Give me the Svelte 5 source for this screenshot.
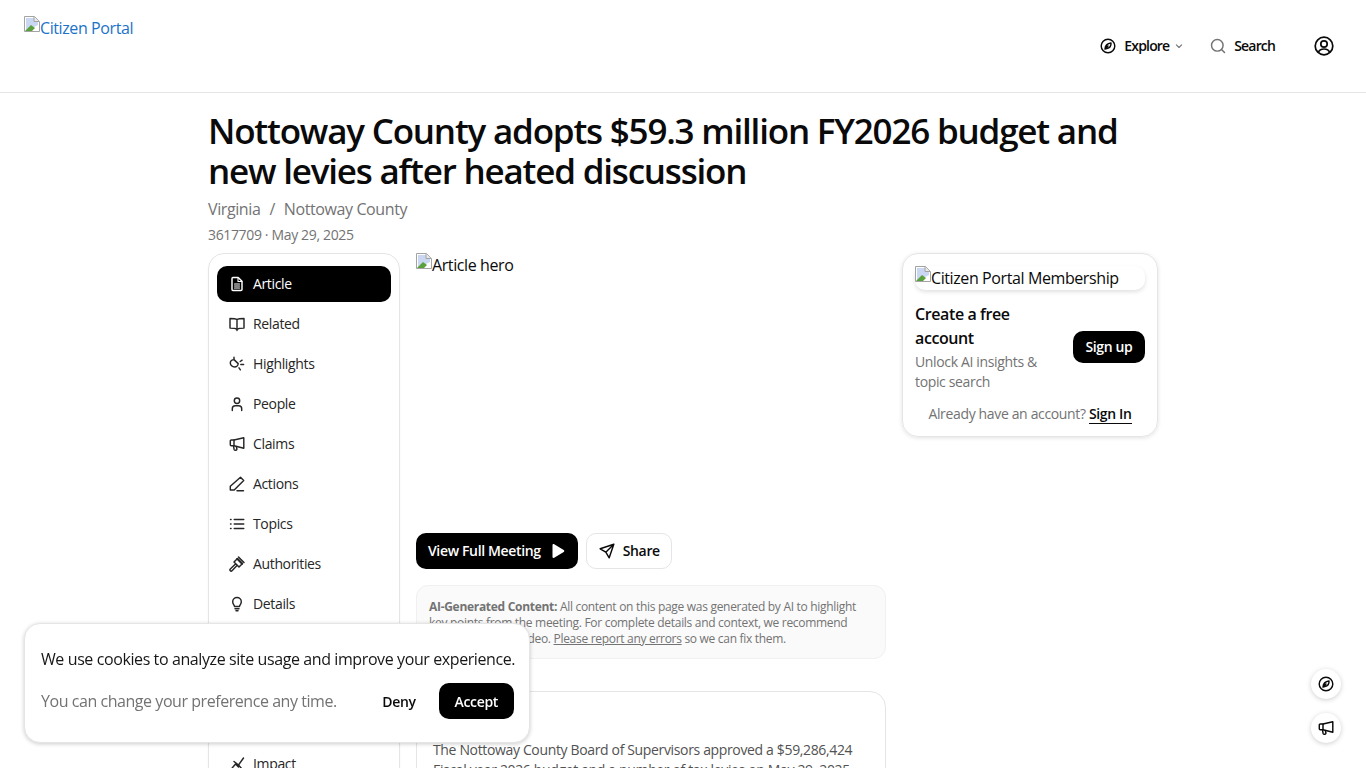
<script>
  const navItems = [
    { label: "Article", icon: "article", active: true },
    { label: "Related", icon: "book" },
    { label: "Highlights", icon: "spark" },
    { label: "People", icon: "person" },
    { label: "Claims", icon: "megaphone" },
    { label: "Actions", icon: "pen" },
    { label: "Topics", icon: "list" },
    { label: "Authorities", icon: "gavel" },
    { label: "Details", icon: "bulb" },
    { label: "Votes", icon: "list" },
    { label: "Funding", icon: "list" },
    { label: "Timeline", icon: "list" },
    { label: "Impact", icon: "impact" }
  ];
</script>

{#snippet icon(name, size = 16)}
  <svg width={size} height={size} viewBox="0 0 16 16" fill="none" stroke="currentColor" stroke-width="1.45" stroke-linecap="round" stroke-linejoin="round">
    {#if name === "article"}
      <path d="M3 2.500A1 1 0 0 1 4 1.500h5.200L13 5.300V13.500a1 1 0 0 1-1 1H4a1 1 0 0 1-1-1z" />
      <path d="M9 1.700V5.500h3.800M5.500 8h5M5.500 10h5M5.500 12h5" stroke-width="1.1" />
    {:else if name === "book"}
      <path d="M8 3.600C7 2.800 5.600 2.400 1 2.400v9.700c4.500 0 6 .4 7 1.300 1-.9 2.500-1.300 7-1.300V2.400C10.400 2.400 9 2.800 8 3.600zM8 3.600v10.800" />
    {:else if name === "spark"}
      <path d="M5 1.200v2.500M1.300 7c0-1.900 1.700-3.400 3.700-3.400l4.200 4c0 1.800-1.700 3.400-3.600 3.400C3.300 11 1.300 9 1.300 7z" />
      <path d="M11.200 5.500l1.900-1.300M11.800 8.400h2.800M10 11.800l1.400 2" />
    {:else if name === "person"}
      <circle cx="8" cy="4.700" r="2.700" />
      <path d="M3.300 14.500v-1.700a3 3 0 0 1 3-3h3.400a3 3 0 0 1 3 3v1.700" />
    {:else if name === "megaphone"}
      <path d="M14.800 1.800v10.400L5 9.800H2.300a1 1 0 0 1-1-1V5a1 1 0 0 1 1-1H5z" />
      <path d="M4.500 9.800l.6 3.600a1 1 0 0 0 1 .8h.8a1 1 0 0 0 1-1.200l-.5-2.400M5 4v5.800" />
    {:else if name === "pen"}
      <path d="M11.500 1.300l3.200 3.200-9.500 9.500H1.300v-3.800zM8 14.800h6.500" />
    {:else if name === "list"}
      <path d="M5.300 3.500h9.400M5.300 8h9.400M5.300 12.500h9.400" stroke-width="1.6" />
      <path d="M1.600 3.500h.4M1.600 8h.4M1.600 12.500h.4" stroke-width="1.6" />
    {:else if name === "gavel"}
      <path d="M9.500 1l5.500 5.500M7.800 2.800l5.400 5.400M8.500 2.500L5 6l5 5 3.500-3.500zM6.500 8L1.300 13a1.200 1.200 0 0 0 1.700 1.700L8 9.500" />
    {:else if name === "bulb"}
      <path d="M5.500 10.500c0-1.300-1.800-2.200-1.800-4.700a4.300 4.300 0 0 1 8.600 0c0 2.500-1.800 3.400-1.800 4.700zM6 12.800h4M7 14.800h2" />
    {:else if name === "impact"}
      <path d="M1.500 14l5-6 3 3M5 5.500l4.500 3.500 5-7M9.500 9l3.500 4" />
    {:else if name === "compass"}
      <circle cx="8" cy="8" r="6.800" />
      <path d="M11 5c.2 2.600-1 5-4.200 5.600L5 11c.2-3 1.800-5.400 6-6zM5 11l3-3" />
    {:else if name === "search"}
      <circle cx="7.300" cy="7.300" r="5.800" />
      <path d="M11.500 11.500l3 3" />
    {:else if name === "send"}
      <path d="M14.800 1.200L1.200 5.800l5.600 3.400 3.400 5.600zM6.800 9.200l8-8" />
    {:else if name === "chevron"}
      <path d="M4.500 6.500L8 10l3.500-3.500" />
    {/if}
  </svg>
{/snippet}

{#snippet brokenImg(alt)}
  <span class="broken">
    <svg class="broken-icon" width="16" height="16" viewBox="0 0 16 16">
      <path d="M.5.5h10l5 5v10H.5z" fill="#fff" stroke="#a3a3a3" />
      <path d="M2 2h8v4h4v3L8 12l-6 2z" fill="#c9d7f2" />
      <path d="M1 15l6-6 4 3-3 3z" fill="#5aa03c" />
      <path d="M10 .5v5h5" fill="#e8e8e8" stroke="#a3a3a3" />
    </svg>{alt}
  </span>
{/snippet}

<header class="site-header">
  <a class="logo" href="#top">{@render brokenImg("Citizen Portal")}</a>
  <nav class="top-nav">
    <button class="top-link">{@render icon("compass")}<span class="t">Explore</span><span class="chev">{@render icon("chevron", 12)}</span></button>
    <button class="top-link"><span class="grey">{@render icon("search")}</span><span class="t">Search</span></button>
    <button class="account" aria-label="Account">
      <svg width="20" height="20" viewBox="0 0 20 20" fill="none" stroke="currentColor" stroke-width="1.7">
        <circle cx="10" cy="10" r="8.800" />
        <circle cx="10" cy="8" r="3.200" />
        <path d="M4.300 16.500c.8-2.300 2.900-3.500 5.700-3.500s4.900 1.200 5.700 3.500" />
      </svg>
    </button>
  </nav>
</header>

<main class="page">
  <h1>Nottoway County adopts $59.3 million FY2026 budget and new levies after heated discussion</h1>
  <div class="crumbs"><span>Virginia</span><span class="sep">/</span><span>Nottoway County</span></div>
  <div class="meta">3617709 · May 29, 2025</div>

  <div class="columns">
    <aside class="sidebar">
      {#each navItems as item}
        <a class="nav-item" class:active={item.active} href="#top">
          {@render icon(item.icon)}
          <span class="t">{item.label}</span>
        </a>
      {/each}
    </aside>

    <div class="content">
      <div class="hero">{@render brokenImg("Article hero")}</div>
      <div class="actions">
        <button class="btn-dark"><span class="t">View Full Meeting</span>
          <svg width="16" height="16" viewBox="0 0 16 16" fill="currentColor"><path d="M2.500 2.200c0-1 .9-1.500 1.700-1l9.500 5.800c.8.500.8 1.500 0 2l-9.500 5.800c-.8.500-1.700 0-1.700-1z" /></svg>
        </button>
        <button class="btn-light">{@render icon("send")}<span class="t">Share</span></button>
      </div>
      <div class="notice">
        <b>AI-Generated Content:</b> All content on this page was generated by AI to highlight key points from the meeting. For complete details and context, we recommend watching the full video. <u>Please report any errors</u> so we can fix them.
      </div>
      <article class="summary">
        <h2>Article</h2>
        <p>The Nottoway County Board of Supervisors approved a $59,286,424 Fiscal year 2026 budget and a number of tax levies on May 29, 2025.</p>
      </article>
    </div>

    <aside class="right">
      <div class="member-card">
        <div class="member-img">{@render brokenImg("Citizen Portal Membership")}</div>
        <div class="member-row">
          <div>
            <div class="member-title">Create a free account</div>
            <div class="member-sub">Unlock AI insights &amp; topic search</div>
          </div>
          <button class="signup"><span class="t">Sign up</span></button>
        </div>
        <div class="signin">Already have an account? <a href="#top">Sign In</a></div>
      </div>
    </aside>
  </div>
</main>

<div class="cookie">
  <p>We use cookies to analyze site usage and improve your experience.</p>
  <div class="cookie-row">
    <span class="cookie-note">You can change your preference any time.</span>
    <button class="deny">Deny</button>
    <button class="accept">Accept</button>
  </div>
</div>

<div class="fabs">
  <button class="fab" aria-label="Explore">{@render icon("compass")}</button>
  <button class="fab" aria-label="Claims">{@render icon("megaphone")}</button>
</div>

<style>
  :global(html), :global(body) {
    height: 768px;
    overflow: hidden;
  }
  :global(body) {
    background: #fff;
    color: #0a0a0a;
    font-family: "Open Sans", "Noto Sans", sans-serif;
    font-size: 14px;
  }
  :global(*) {
    letter-spacing: -0.025em;
  }
  button {
    font: inherit;
    border: 0;
    background: none;
    color: inherit;
    padding: 0;
  }
  a {
    color: inherit;
    text-decoration: none;
  }
  svg {
    flex: none;
    display: block;
  }
  .t {
    display: block;
    margin-bottom: 2px;
  }
  .broken {
    font-size: 16px;
    line-height: 24px;
  }
  .broken-icon {
    display: inline-block;
    vertical-align: 2px;
  }
  .site-header {
    box-sizing: border-box;
    height: 93px;
    border-bottom: 1px solid #e5e5e5;
    display: flex;
    justify-content: space-between;
    padding: 16px 32px 0 24px;
  }
  .logo {
    color: #1a73c8;
  }
  .top-nav {
    display: flex;
    align-items: center;
    height: 60px;
    gap: 25px;
  }
  .top-link {
    display: flex;
    align-items: center;
    gap: 8px;
    font-weight: 600;
    font-size: 14px;
  }
  .top-link .t {
    letter-spacing: -0.06em;
  }
  .chev, .grey {
    color: #737373;
  }
  .chev {
    margin-left: -4px;
  }
  .account {
    margin-left: 14px;
  }
  .page {
    width: 950px;
    margin: 0 auto;
    padding-top: 18px;
  }
  h1 {
    margin: 0;
    font-size: 35px;
    line-height: 40px;
    font-weight: 600;
    letter-spacing: -1.2px;
  }
  .crumbs {
    display: flex;
    gap: 9px;
    margin-top: 6px;
    font-size: 16px;
    line-height: 24px;
    color: #737373;
  }
  .meta {
    margin-top: 4px;
    font-size: 14px;
    line-height: 20px;
    color: #737373;
  }
  .columns {
    display: grid;
    grid-template-columns: 192px 470px 256px;
    gap: 16px;
    margin-top: 8px;
    align-items: start;
  }
  .sidebar {
    border: 1px solid #e5e5e5;
    border-radius: 16px;
    padding: 12px 8px;
    display: flex;
    flex-direction: column;
    gap: 4px;
    box-shadow: 0 1px 2px rgba(0,0,0,.05);
  }
  .nav-item {
    height: 36px;
    border-radius: 10px;
    display: flex;
    align-items: center;
    gap: 8px;
    padding: 0 12px;
    color: #262626;
  }
  .nav-item.active {
    background: #000;
    color: #fff;
    font-weight: 500;
  }
  .hero {
    height: 264px;
    margin-bottom: 16px;
  }
  .actions {
    display: flex;
    gap: 8px;
  }
  .btn-dark {
    height: 36px;
    padding: 0 12px;
    border-radius: 10px;
    background: #000;
    color: #fff;
    font-weight: 600;
    display: flex;
    align-items: center;
    gap: 9px;
  }
  .btn-light {
    height: 36px;
    padding: 0 11px 0 12px;
    border-radius: 10px;
    border: 1px solid #e5e5e5;
    font-weight: 600;
    display: flex;
    align-items: center;
    gap: 8px;
  }
  .notice {
    margin-top: 16px;
    padding: 13px 12px 11px;
    border: 1px solid #f0f0f0;
    background: #fafafa;
    border-radius: 12px;
    font-size: 12px;
    line-height: 16px;
    color: #737373;
  }
  .summary {
    margin-top: 32px;
    border: 1px solid #e5e5e5;
    border-radius: 16px;
    padding: 16px;
  }
  .summary h2 {
    margin: 0 0 8px;
    font-size: 16px;
    line-height: 24px;
    font-weight: 600;
  }
  .summary p {
    margin: 0;
    line-height: 20px;
    color: #525252;
  }
  .member-card {
    border: 1px solid #e5e5e5;
    border-radius: 16px;
    padding: 12px;
    box-shadow: 0 1px 4px rgba(0,0,0,.12);
  }
  .member-img {
    border-radius: 10px;
    box-shadow: 0 2px 4px rgba(0,0,0,.12);
    height: 24px;
    margin-bottom: 12px;
  }
  .member-row {
    display: flex;
    align-items: center;
    gap: 12px;
    justify-content: space-between;
  }
  .member-title {
    font-size: 16px;
    line-height: 24px;
    font-weight: 600;
  }
  .member-sub {
    margin-top: 2px;
    line-height: 20px;
    color: #737373;
  }
  .signup {
    flex: none;
    height: 32px;
    padding: 0 12.5px;
    border-radius: 10px;
    background: #000;
    color: #fff;
    font-weight: 600;
  }
  .signin {
    margin-top: 12px;
    text-align: center;
    color: #737373;
    line-height: 20px;
  }
  .signin a {
    color: #0a0a0a;
    font-weight: 600;
    border-bottom: 1px solid #0a0a0a;
  }
  .cookie {
    position: fixed;
    left: 24px;
    top: 623px;
    width: 506px;
    box-sizing: border-box;
    background: #fff;
    border: 1px solid #e5e5e5;
    border-radius: 16px;
    padding: 23px 15px 23px 16px;
    box-shadow: 0 1px 4px rgba(0,0,0,.2);
  }
  .cookie p {
    margin: 0;
    font-size: 16px;
    line-height: 24px;
    color: #171717;
    white-space: nowrap;
  }
  .cookie-row {
    display: flex;
    align-items: center;
    margin-top: 12px;
    font-size: 16px;
    color: #737373;
  }
  .cookie-note {
    flex: 1;
    letter-spacing: -0.028em;
  }
  .deny {
    font-weight: 600;
    font-size: 14px;
    color: #0a0a0a;
    margin-right: 23px;
  }
  .accept {
    height: 36px;
    padding: 0 16px;
    border-radius: 10px;
    background: #000;
    color: #fff;
    font-weight: 600;
    font-size: 14px;
  }
  .fabs {
    position: fixed;
    right: 25px;
    top: 669px;
    display: flex;
    flex-direction: column;
    gap: 14px;
  }
  .fab {
    width: 30px;
    height: 30px;
    border-radius: 50%;
    background: #fff;
    display: flex;
    align-items: center;
    justify-content: center;
    box-shadow: 0 1px 5px rgba(0,0,0,.2);
  }
</style>
